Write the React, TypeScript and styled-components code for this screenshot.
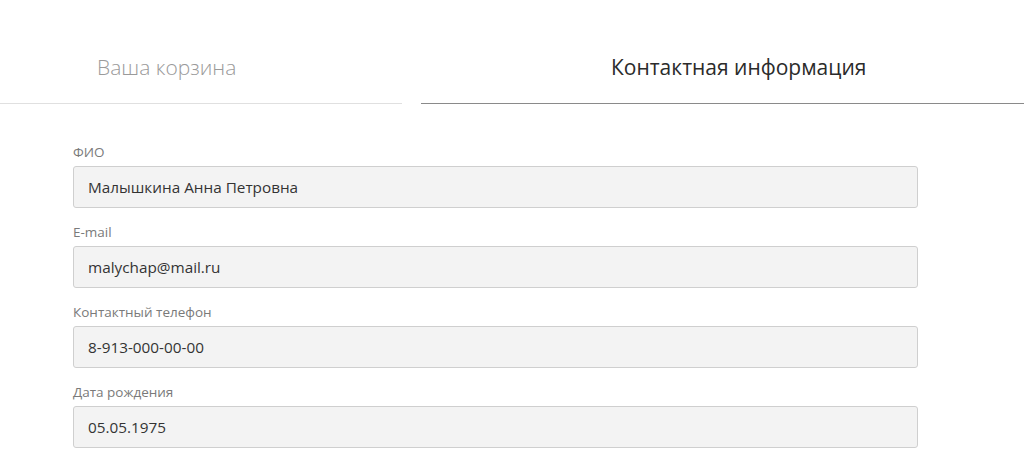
import React from "react";
import styled, { createGlobalStyle } from "styled-components";

const GlobalStyle = createGlobalStyle`
  body {
    margin: 0;
    background: #fff;
    font-family: "Open Sans", "Liberation Sans", sans-serif;
  }
`;

const Page = styled.div`
  width: 1024px;
`;

const Tabs = styled.div`
  display: flex;
  gap: 19px;
`;

const Tab = styled.div<{ $active?: boolean }>`
  box-sizing: border-box;
  height: 104px;
  display: flex;
  align-items: center;
  padding-top: 30px;
  font-size: 21px;
  flex: ${(p) => (p.$active ? "1" : "0 0 402px")};
  padding-left: ${(p) => (p.$active ? "190px" : "97px")};
  font-weight: ${(p) => (p.$active ? 400 : 300)};
  color: ${(p) => (p.$active ? "#2b2b2b" : "#9a9a9a")};
  border-bottom: 1px solid ${(p) => (p.$active ? "#8a8a8a" : "#e0e0e0")};
`;

const Form = styled.form`
  padding: 39px 0 0 73px;
  width: 845px;
`;

const Field = styled.div`
  margin-bottom: 15px;
`;

const Label = styled.label`
  display: block;
  font-size: 13.5px;
  line-height: 18px;
  color: #7a7a7a;
  margin-bottom: 5px;
`;

const Input = styled.input`
  box-sizing: border-box;
  display: block;
  width: 100%;
  height: 42px;
  padding: 0 14px;
  background: #f3f3f3;
  border: 1px solid #cfcfcf;
  border-radius: 3px;
  font-family: "Open Sans", "Liberation Sans", sans-serif;
  font-size: 15.3px;
  color: #333;
  outline: none;
`;

const fields = [
  { label: "ФИО", value: "Малышкина Анна Петровна" },
  { label: "E-mail", value: "malychap@mail.ru" },
  { label: "Контактный телефон", value: "8-913-000-00-00" },
  { label: "Дата рождения", value: "05.05.1975" },
];

const App: React.FC = () => {
  return (
    <Page>
      <GlobalStyle />
      <Tabs>
        <Tab>Ваша корзина</Tab>
        <Tab $active>Контактная информация</Tab>
      </Tabs>
      <Form>
        {fields.map((f) => (
          <Field key={f.label}>
            <Label>{f.label}</Label>
            <Input defaultValue={f.value} readOnly />
          </Field>
        ))}
      </Form>
    </Page>
  );
};

export default App;
